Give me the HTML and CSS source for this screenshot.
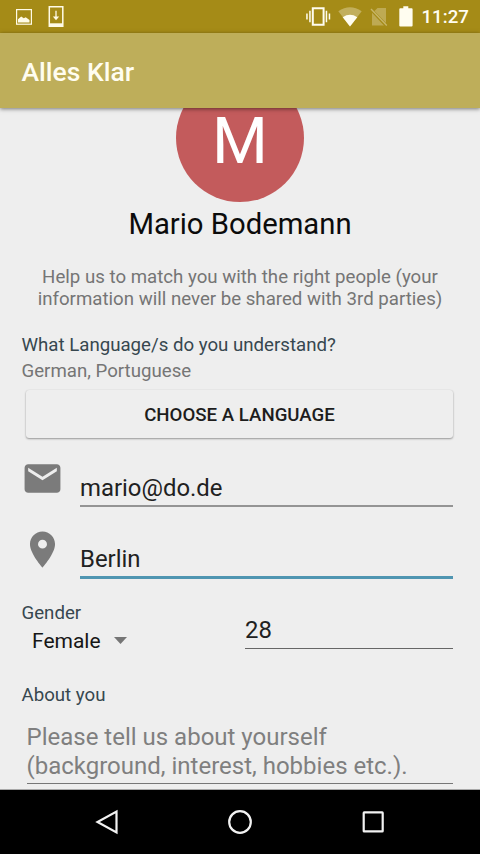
FILE: index.html
```html
<!DOCTYPE html>
<html lang="en">
<head>
<meta charset="utf-8">
<title>Alles Klar</title>
<link rel="stylesheet" href="styles.css">
</head>
<body>
<div class="screen">
  <header class="status-bar">
    <svg class="status-icons-left" width="70" height="33" viewBox="0 0 70 33" fill="none" stroke="#fffbe6">
      <rect x="16.6" y="9.6" width="14.8" height="14.6" stroke-width="1.2"/>
      <path d="M18 22.5v-3.200l3.200-2.800 2.600 1.800 1.900-1.100 3.800 2.800v2.500z" fill="#fffbe6" stroke="none"/>
      <path d="M49.300 6.800h13.500v19.500H49.300z" stroke-width="1.5"/>
      <path d="M49 23.300h14v3.500H49z" fill="#fffbe6" stroke="none"/>
      <path d="M56 10.800v6.500" stroke-width="1.300"/>
      <path d="M52.800 16.600h6.400l-3.200 3.600z" fill="#fffbe6" stroke="none"/>
    </svg>
    <svg class="status-icons-right" width="115" height="33" viewBox="300 0 115 33" fill="#fffdf0">
      <path d="M312.800 8.200h10.800v16.600h-10.800z" fill="none" stroke="#fffdf0" stroke-width="2"/>
      <path d="M309.200 10.800h1.500v11.400h-1.500zM306.200 13.500h1.500v6h-1.500zM325.700 10.800h1.500v11.400h-1.500zM328.700 13.500h1.500v6h-1.500z"/>
      <path d="M338.300 11.200Q350 3.200 361.700 11.200L350 26.500z" opacity=".32"/>
      <path d="M342.700 17.200Q350 12.300 357.300 17.200L350 26.500z"/>
      <path d="M377.500 8H386v15L374.500 11zM372 12.800L384 25.500H372z" opacity=".28"/>
      <path d="M371 9l15.800 16.500" fill="none" stroke="#fffdf0" stroke-width="1.4" opacity=".38"/>
      <path d="M403.300 6.200h5v2h3.300q1 0 1 1v16.200q0 1-1 1h-11.300q-1 0-1-1V9.200q0-1 1-1h3z"/>
    </svg>
    <span class="clock">11:27</span>
  </header>
  <div class="app-bar"><h1 class="app-title">Alles Klar</h1></div>
  <main class="content">
    <div class="avatar">M</div>
    <h2 class="name">Mario Bodemann</h2>
    <p class="hint">Help us to match you with the right people (your<br>information will never be shared with 3rd parties)</p>
    <div class="label">What Language/s do you understand?</div>
    <div class="languages">German, Portuguese</div>
    <button class="choose">CHOOSE A LANGUAGE</button>
    <div class="row row-email">
      <svg class="row-icon" width="43" height="43" viewBox="0 0 24 24"><path d="M20 4H4c-1.1 0-2 .9-2 2v12c0 1.1.9 2 2 2h16c1.1 0 2-.9 2-2V6c0-1.1-.9-2-2-2zm0 4l-8 5-8-5V6l8 5 8-5v2z"/></svg>
      <div class="field">mario@do.de</div>
    </div>
    <div class="row row-place">
      <svg class="row-icon" width="43" height="43" viewBox="0 0 24 24"><path d="M12 2C8.13 2 5 5.13 5 9c0 5.25 7 13 7 13s7-7.75 7-13c0-3.87-3.13-7-7-7zm0 9.500a2.500 2.500 0 0 1 0-5 2.500 2.500 0 0 1 0 5z"/></svg>
      <div class="field field-active">Berlin</div>
    </div>
    <div class="details">
      <div class="gender">
        <div class="gender-label">Gender</div>
        <div class="spinner"><span>Female</span><svg width="13" height="7" viewBox="0 0 13 7"><path d="M0 0h13L6.500 7z"/></svg></div>
      </div>
      <div class="field field-age">28</div>
    </div>
    <div class="label about-label">About you</div>
    <div class="about">Please tell us about yourself<br>(background, interest, hobbies etc.).</div>
  </main>
  <nav class="nav-bar">
    <svg width="24" height="26" viewBox="0 0 24 26"><path d="M21.500 2.500v21L2.500 13z"/></svg>
    <svg width="26" height="26" viewBox="0 0 26 26"><circle cx="13" cy="13" r="10.800"/></svg>
    <svg width="24" height="26" viewBox="0 0 24 26"><rect x="2.700" y="3.400" width="19" height="19" rx=".5"/></svg>
  </nav>
</div>
</body>
</html>
```
FILE: styles.css
```css
* { box-sizing: border-box; }
body { margin: 0; font-family: Roboto, "Liberation Sans", sans-serif; }
h1, h2, p { margin: 0; font-weight: 400; }

.screen {
  display: flex;
  flex-direction: column;
  width: 480px;
  height: 854px;
  overflow: hidden;
  background: #eeeeee;
}

.status-bar {
  display: flex;
  flex: none;
  height: 33px;
  padding-right: 11px;
  background: #a58b17;
}
.status-icons-right { margin-left: auto; }
.clock {
  width: 54px;
  padding-left: 6.5px;
  color: #fffdf0;
  font-size: 18.67px;
  font-weight: 500;
  line-height: 35px;
  white-space: nowrap;
}

.app-bar {
  position: relative;
  z-index: 1;
  display: flex;
  flex: none;
  align-items: center;
  height: 75px;
  padding: 1px 21.5px 0;
  background: #beae5a;
  box-shadow: 0 1px 4px rgba(0, 0, 0, .5);
}
.app-title {
  color: #fffdf0;
  font-size: 26.5px;
  font-weight: 500;
}

.content {
  flex: none;
  height: 682px;
  padding: 0 27px 0 21.5px;
  overflow: hidden;
  border-bottom: 1px solid #a8a8a8;
}
.avatar {
  width: 128px;
  height: 128px;
  margin: -34px 0 0 154.5px;
  border-radius: 50%;
  background: #c35b5c;
  color: #fff;
  font-size: 64px;
  line-height: 136px;
  text-align: center;
}
.name {
  margin: 5px -5.5px 0 0;
  color: #0b0b0b;
  font-size: 29.25px;
  line-height: 34px;
  text-align: center;
}
.hint {
  margin: 25px -5.5px 0 0;
  color: #757575;
  font-size: 18.67px;
  line-height: 22px;
  text-align: center;
  white-space: nowrap;
}
.label, .languages, .gender-label {
  color: #37474f;
  font-size: 18.67px;
  line-height: 22px;
}
.label { margin-top: 24px; }
.languages { margin-top: 4px; color: #757575; }

.choose {
  display: block;
  width: 427px;
  height: 48px;
  margin: 8px 0 0 4.5px;
  padding: 1px 0 0;
  border: 0;
  border-radius: 3px;
  background: #eeeeee;
  box-shadow: 0 1px 2px rgba(0, 0, 0, .36), 0 0 1px rgba(0, 0, 0, .12);
  color: #1d1d1d;
  font: 500 18.67px Roboto, "Liberation Sans", sans-serif;
}

.row { display: flex; }
.row-email { margin-top: 19px; }
.row-place { margin-top: 21px; }
.row-icon { flex: none; margin: 0 16px 0 -.5px; fill: #7b7b7b; }
.row .field { margin-top: 17px; }
.field {
  flex: 1;
  padding-bottom: 3px;
  border-bottom: 2px solid #949494;
  color: #212121;
  font-size: 23.9px;
  line-height: 28px;
}
.row-place .field-active { border-bottom: 3px solid #4f95b1; }

.details { display: flex; margin-top: 23px; }
.gender { width: 223.5px; }
.spinner {
  display: flex;
  align-items: center;
  gap: 13px;
  margin-top: 4px;
  padding-left: 10.5px;
  color: #161616;
  font-size: 21px;
  line-height: 27px;
}
.spinner svg { margin-bottom: 3px; fill: #757575; }
.field-age {
  align-self: flex-start;
  margin-top: 14px;
  padding-bottom: 4px;
  border-bottom: 1px solid #666;
}
.about-label { margin-top: 29px; }
.about {
  margin: 17px 0 0 5px;
  padding-bottom: 3px;
  border-bottom: 1px solid #777;
  color: #7f7f7f;
  font-size: 24px;
  line-height: 28.5px;
}

.nav-bar {
  display: flex;
  flex: 1;
  justify-content: space-between;
  align-items: center;
  padding: 0 95px;
  background: #000;
}
.nav-bar svg { fill: none; stroke: #f2f2f2; stroke-width: 2.2; }
```
